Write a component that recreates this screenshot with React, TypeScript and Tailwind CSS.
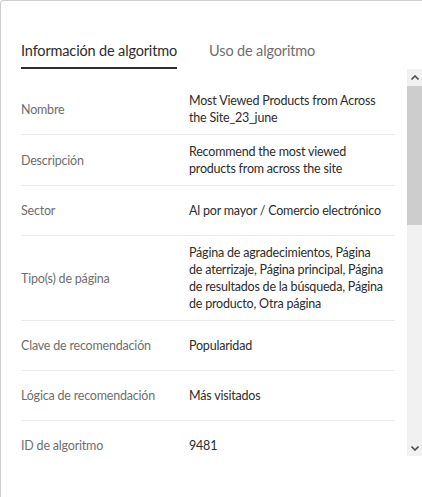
import React from 'react';

const rows: { label: string; value: string }[] = [
  { label: 'Nombre', value: 'Most Viewed Products from Across the Site_23_june' },
  { label: 'Descripción', value: 'Recommend the most viewed products from across the site' },
  { label: 'Sector', value: 'Al por mayor / Comercio electrónico' },
  {
    label: 'Tipo(s) de página',
    value:
      'Página de agradecimientos, Página de aterrizaje, Página principal, Página de resultados de la búsqueda, Página de producto, Otra página',
  },
  { label: 'Clave de recomendación', value: 'Popularidad' },
  { label: 'Lógica de recomendación', value: 'Más visitados' },
  { label: 'ID de algoritmo', value: '9481' },
];

function Chevron({ up }: { up?: boolean }) {
  return (
    <svg width="8" height="5" viewBox="0 0 8 5" className={up ? '' : 'rotate-180'}>
      <path d="M0.5 4.5 L4 1 L7.5 4.5" fill="none" stroke="#505050" strokeWidth="1.6" />
    </svg>
  );
}

// Classic scrollbar drawn next to the list
function Scrollbar() {
  return (
    <div className="w-[15px] shrink-0 bg-[#f1f1f1] flex flex-col">
      <div className="h-[17px] flex items-center justify-center">
        <Chevron up />
      </div>
      <div className="flex-1">
        <div className="h-[139px] bg-[#cdcdcd]"></div>
      </div>
      <div className="h-[15px] flex items-center justify-center">
        <Chevron />
      </div>
    </div>
  );
}

export default function App() {
  return (
    <div className="w-[422px] h-[497px] bg-white border-l border-t border-[#cfcfcf] rounded-tl-[4px] overflow-hidden font-['Lato',sans-serif]">
      {/* Tabs */}
      <div className="flex gap-[32px] px-[20px] pt-[38px]">
        <div className="pb-[4px] border-b-2 border-[#2c2c2c] text-[14.5px] tracking-[-0.15px] text-[#2c2c2c] leading-[24px]">
          Información de algoritmo
        </div>
        <div className="pb-[4px] text-[14.5px] tracking-[-0.15px] text-[#6e6e6e] leading-[24px]">Uso de algoritmo</div>
      </div>

      {/* Details */}
      <div className="flex h-[387px]">
        <div className="flex-1 overflow-hidden pt-[15px] pl-[20px] pr-[12px]">
          {rows.map((r) => (
            <div
              key={r.label}
              className="flex items-center min-h-[50px] py-[8px] border-b border-[#eaeaea] text-[12.5px] tracking-[-0.2px] leading-[17px]"
            >
              <div className="w-[168px] shrink-0 text-[#6e6e6e]">{r.label}</div>
              <div className="w-[196px] text-[#2c2c2c]">{r.value}</div>
            </div>
          ))}
        </div>
        <Scrollbar />
      </div>
    </div>
  );
}
